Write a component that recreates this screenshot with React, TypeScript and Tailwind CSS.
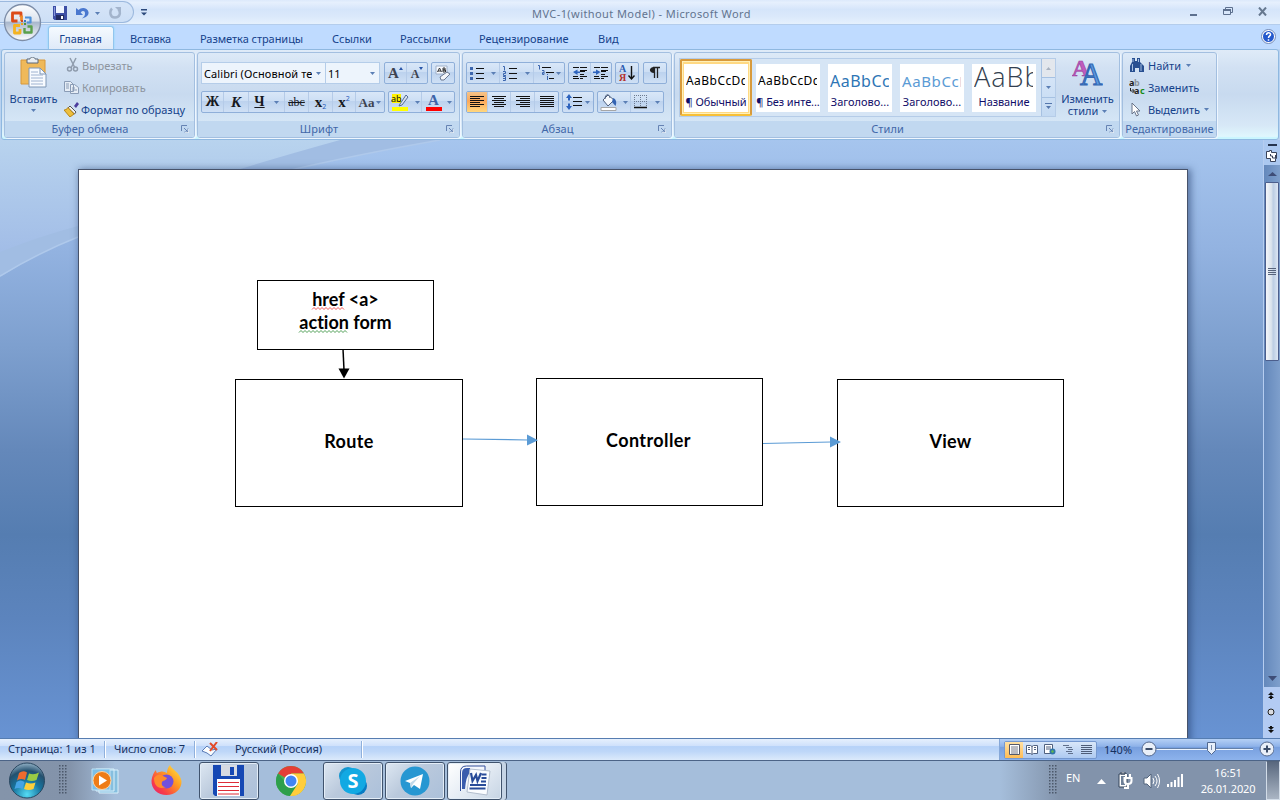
import React from "react";

type Kids = { children?: React.ReactNode; className?: string };

const Dn = ({ className = "" }: { className?: string }) => (
  <svg className={`shrink-0 ${className}`} width="5" height="3" viewBox="0 0 5 3">
    <path d="M0 0h5L2.500 3z" fill="#5b7fb5" />
  </svg>
);

const Svg = ({ w, h, children, className = "" }: Kids & { w: number; h: number }) => (
  <svg className={`shrink-0 ${className}`} width={w} height={h} viewBox={`0 0 ${w} ${h}`} fill="none">
    {children}
  </svg>
);

const Group = ({ label, w, launcher = true, children, className = "" }: Kids & { label: string; w: string; launcher?: boolean }) => (
  <section className={`flex h-[86px] shrink-0 flex-col overflow-hidden rounded-[3px] border border-[#a3bfe0] shadow-[1px_1px_0_#eef6ff] ${w}`}>
    <div className={`flex h-[68px] shrink-0 ${className}`}>{children}</div>
    <div className="flex h-4 items-center bg-[#c1d8f0] text-[11px] leading-none text-[#4167a8]">
      <span className={`flex-1 whitespace-nowrap pb-[2px] text-center ${launcher ? "pr-[6px] tracking-[0.08px]" : "tracking-[0px]"}`}>{label}</span>
      {launcher && (
        <Svg w={8} h={8} className="mb-px mr-[5px]">
          <path d="M.5 6V.5H6M3 3l3.5 3.5M7 3.5V7H3.5" stroke="#6683b3" />
          <path d="M7.5 4v3.5H4" stroke="#fff" strokeOpacity=".6" />
        </Svg>
      )}
    </div>
  </section>
);

const Box = ({ children, className = "" }: Kids) => (
  <div className={`flex h-[22px] shrink-0 divide-x divide-[#b5cbe8] overflow-hidden rounded-[2px] border border-[#8fafd9] bg-[linear-gradient(#d9e7f8_0%,#ccdef4_45%,#bcd2ee_46%,#cfe0f5_100%)] ${className}`}>
    {children}
  </div>
);

const Cell = ({ children, className = "" }: Kids) => (
  <div className={`flex h-full shrink-0 items-center justify-center ${className}`}>{children}</div>
);

const Lines = ({ rows, color = "#111" }: { rows: number[][]; color?: string }) => (
  <g fill={color} shapeRendering="crispEdges">
    {rows.map((r, i) => (
      <rect key={i} x={r[0]} y={r[1]} width={r[2]} height="1" />
    ))}
  </g>
);

function TitleBar() {
  return (
    <header className="relative flex h-[25px] shrink-0 items-center border-b border-[#b4cdec] bg-[linear-gradient(#dce9fb_0%,#e6f0fd_10%,#d5e5fa_40%,#dbe9fb_70%,#e6f1fd_100%)]">
      <div className="flex h-[22px] w-[134px] items-center rounded-r-[11px] border border-l-0 border-[#9cb9de] bg-[linear-gradient(#d6e5f8,#cddff6)] pl-[53px] pt-[2px]">
        <Svg w={14} h={14}>
          <path d="M0 0h14v14H1.500L0 12.500z" fill="#3d4fa5" />
          <path d="M3 0h8v7H3z" fill="#eef4ff" />
          <path d="M3 9h8v5H3z" fill="#222c62" />
          <path d="M8 10h2v3H8z" fill="#fff" />
          <path d="M1 1h1v9H1z" fill="#8897dc" />
        </Svg>
        <Svg w={13} h={12} className="ml-[9px]">
          <path d="M0 1v7h7L4.700 5.500C6.500 3.300 9 3.800 9 6.500c0 2-1 3.500-3 5C10.500 10.500 13 8.500 12.500 5 11.500.500 5.500-.500 2.500 3z" fill="#4a78cf" />
        </Svg>
        <Dn className="ml-[6px]" />
        <Svg w={13} h={12} className="ml-[9px]">
          <path d="M3 1.500C.500 4 .500 10.500 6 10.500c5 0 6-5 3.500-8" stroke="#a3b4cc" strokeWidth="2.500" />
          <path d="M6 0h6v6z" fill="#a3b4cc" />
        </Svg>
      </div>
      <Svg w={6} h={7} className="ml-[7px]">
        <path d="M0 0h6v1.500H0zM0 3.500h6L3 6.500z" fill="#2d4a7c" />
      </Svg>
      <h1 className="ml-[385px] whitespace-nowrap pt-[2px] text-[11px] font-normal leading-none tracking-[0.42px] text-[#62748f]">MVC-1(without Model) - Microsoft Word</h1>
      <div className="ml-auto flex items-center pb-px pr-[13px]">
        <Svg w={8} h={12} className="mr-[26px]"><path d="M1 8h7v2H1z" fill="#5d708e" /></Svg>
        <Svg w={10} h={9} className="mr-[25px]"><path d="M2.500 2V.500h7v5H8M.500 3.500h7v4h-7z" stroke="#5d708e" /><path d="M0 2h8v2H0z" fill="#5d708e" /></Svg>
        <Svg w={9} h={9}><path d="M1 .500l7 8M8 .500l-7 8" stroke="#66788f" strokeWidth="2" /></Svg>
      </div>
      <svg className="absolute left-[3px] top-[3px] z-20" width="39" height="40" viewBox="0 0 39 40">
        <defs>
          <linearGradient id="orb" x1="0" y1="0" x2="0" y2="1">
            <stop offset="0" stopColor="#fff" />
            <stop offset=".45" stopColor="#dbe3ee" />
            <stop offset=".5" stopColor="#a9b8cd" />
            <stop offset="1" stopColor="#fff" />
          </linearGradient>
        </defs>
        <circle cx="19.500" cy="19.500" r="18" fill="url(#orb)" stroke="#7e8ea8" strokeWidth="1.300" />
        <g strokeWidth="2.800" fill="none" strokeLinejoin="round">
          <path d="M14.500 18H9.500v-8H18V14" stroke="#dc4a18" />
          <path d="M18.500 12.500V18" stroke="#f08a24" />
          <path d="M22 14.500h5.500V19.500h-3.500" stroke="#4d91d8" strokeWidth="2.200" />
          <path d="M17 22.500h-5.500v7.500H17v-4" stroke="#f4b322" />
          <path d="M21.500 25v4.500h7v-6h-4" stroke="#5aa04b" strokeWidth="2.400" />
        </g>
        <path d="M18 17h2v2h-2z" fill="#d34a20" /><path d="M21 17h2v2h-2z" fill="#3b78c4" /><path d="M18 20h2v2h-2z" fill="#efa51d" /><path d="M21 20h2v2h-2z" fill="#4d9440" />
      </svg>
    </header>
  );
}

function Tabs() {
  return (
    <nav className="flex h-6 shrink-0 items-end bg-[#bfdbff] pl-[48px] text-[11px] leading-none text-[#15428b]">
      <div className="flex h-[23px] w-[66px] items-center justify-center rounded-t-[3px] border border-b-0 border-[#92c5ee] bg-[linear-gradient(#f5faff,#dfeaf8)] pt-px shadow-[0_0_2px_#7fdcf5]"><span className="-ml-px tracking-[-0.1px]">Главная</span></div>
      <div className="flex h-[23px] items-center whitespace-nowrap pt-[2px]">
        <span className="ml-4 w-[70px] tracking-[-0.1px]">Вставка</span>
        <span className="w-[132px] tracking-[-0.05px]">Разметка страницы</span>
        <span className="w-[68px]">Ссылки</span>
        <span className="w-[79px]">Рассылки</span>
        <span className="w-[119px]">Рецензирование</span>
        <span>Вид</span>
      </div>
      <Svg w={15} h={15} className="mb-[5px] ml-auto mr-[4px]">
        <circle cx="7.500" cy="7.500" r="7" fill="#fff" stroke="#7189b6" />
        <circle cx="7.500" cy="7.500" r="5.500" fill="#2459cc" />
        <path d="M5.500 6C5.500 3 9.700 3.200 9.500 5.600 9.400 7 7.500 7 7.500 9M7.500 10.200v1.500" stroke="#fff" strokeWidth="1.500" />
      </Svg>
    </nav>
  );
}

function Clipboard() {
  return (
    <Group label="Буфер обмена" w="w-[191px]">
      <div className="flex w-[57px] flex-col items-center pt-[4px] text-[11px] leading-none text-[#15428b]">
        <Svg w={27} h={32}>
          <path d="M1 3h24v24H1z" fill="#efb95a" stroke="#d8983b" />
          <path d="M7 2h3c0-2.500 5-2.500 5 0h3v4H7z" fill="#e8edf2" stroke="#5d6978" />
          <path d="M9 11h11l6 6v13H9z" fill="#f8fbff" stroke="#7e96b5" />
          <path d="M20 11v6h6" stroke="#7e96b5" />
          <path d="M11 15h7M11 18h12M11 21h12M11 24h12M11 27h12" stroke="#9eb2d0" />
        </Svg>
        <span className="mt-[4px] whitespace-nowrap">Вставить</span>
        <Dn className="mt-[5px]" />
      </div>
      <div className="flex flex-col pl-[2px] text-[11px] leading-none text-[#8d959f]">
        <div className="flex h-[22px] items-center pt-[2px]"><Svg w={18} h={16}><path d="M6 1l5 10M12 1L7 11" stroke="#8f9cad" strokeWidth="1.500" /><circle cx="5.500" cy="12" r="2" stroke="#8f9cad" strokeWidth="1.500" /><circle cx="11.500" cy="12" r="2" stroke="#8f9cad" strokeWidth="1.500" /></Svg><span className="tracking-[-0.02px]">Вырезать</span></div>
        <div className="flex h-[22px] items-center pt-[2px]"><Svg w={18} h={14}><path d="M.500 1.500h6l3 3v7h-9zM6.500 4.500h4l4 3v6h-8z" fill="#e6edf6" stroke="#8a9cb6" /><path d="M2 4h3M2 6h3M2 8h3M8 8h3M8 10h5" stroke="#8a9cb6" /></Svg><span className="tracking-[0.05px]">Копировать</span></div>
        <div className="flex h-[22px] items-center pt-[2px] text-[#15428b]"><Svg w={17} h={15}><path d="M10 4l3-4 2 2-3 4z" fill="#4c3d9c" /><path d="M6 4l6 6-1.500 2L4 6z" fill="#f2f2f2" stroke="#555" /><path d="M4 5.500L10 12l-4 3-6-7c1 0 3-.500 4-2.500z" fill="#edbf3e" stroke="#b98716" /></Svg><span className="whitespace-nowrap tracking-[-0.02px]">Формат по образцу</span></div>
      </div>
    </Group>
  );
}

const Serif = ({ children, className = "" }: Kids) => (
  <span className={`font-['Liberation_Serif',serif] font-bold leading-none text-[#16181d] ${className}`}>{children}</span>
);

function FontGroup() {
  return (
    <Group label="Шрифт" w="w-[263px]" className="flex-col gap-[7px] pl-[3px] pt-[9px]">
      <div className="flex">
        <div className="flex h-[22px] w-[125px] items-center border border-[#b5cde9] bg-[#edf4fc] pl-[2px] text-[11px] leading-none text-black">
          <span className="w-[108px] overflow-hidden whitespace-nowrap py-1 tracking-[0.1px]">Calibri (Основной текст)</span><Dn className="ml-[4px]" />
        </div>
        <div className="flex h-[22px] w-[54px] items-center border border-l-0 border-[#b5cde9] bg-[#edf4fc] pl-[2px] text-[11px] leading-none text-black">
          <span className="w-[42px]">11</span><Dn />
        </div>
        <Box className="ml-[4px] w-[44px]">
          <Cell className="w-[22px]"><Serif className="text-[15px] text-[#3d4350]!">A</Serif><Svg w={4} h={12}><path d="M0 3h4L2 0z" fill="#2956a8" /></Svg></Cell>
          <Cell className="w-5"><Serif className="pt-[2px] text-[12px] text-[#3d4350]!">A</Serif><Svg w={4} h={12}><path d="M0 0h4L2 3z" fill="#2956a8" /></Svg></Cell>
        </Box>
        <Box className="ml-[3px] w-6">
          <Cell className="w-[22px]"><Svg w={16} h={16}><path d="M1 1h11v8H1z" fill="#f7faff" stroke="#9fb0c9" /><path d="M2.500 7L4.500 3l2 4M3 6h3M8 3v4h2.500V5H8h2V3z" stroke="#333" /><path d="M5 12l7-5 3 2-6 6H6z" fill="#f3f5f9" stroke="#6b7890" /></Svg></Cell>
        </Box>
      </div>
      <div className="flex">
        <Box className="w-[184px]">
          <Cell className="w-[22px]"><Serif className="text-[14px]">Ж</Serif></Cell>
          <Cell className="w-[25px]"><Serif className="text-[15px] italic">К</Serif></Cell>
          <Cell className="w-[36px]"><Serif className="text-[14px] underline">Ч</Serif><Dn className="ml-[9px]" /></Cell>
          <Cell className="w-[24px]"><Serif className="text-[12px] font-normal! line-through">abc</Serif></Cell>
          <Cell className="w-[24px]"><Serif className="text-[15px]">x</Serif><span className="pt-2 text-[7px] leading-none text-[#1f58b8]">2</span></Cell>
          <Cell className="w-[23px]"><Serif className="text-[15px]">x</Serif><span className="pb-2 text-[7px] leading-none text-[#1f58b8]">2</span></Cell>
          <Cell className="w-[28px]"><Serif className="text-[13px] text-[#3d4350]!">Aa</Serif><Dn className="ml-[2px]" /></Cell>
        </Box>
        <Box className="ml-[3px] w-[67px]">
          <Cell className="w-[33px]">
            <Svg w={18} h={18}><path d="M1 1h9v9H1z" fill="#fff200" /><path d="M1 14h16v4H1z" fill="#ff0" /><path d="M9 11l6-9 2 2-6 8-3 1z" fill="#dbe3ee" stroke="#526b96" /><text x="0" y="9" fontSize="9" fill="#111">ab</text></Svg><Dn className="ml-[6px]" />
          </Cell>
          <Cell className="w-[32px]">
            <Svg w={17} h={18}><text x="3" y="12" fontSize="15" fontWeight="bold" fontFamily="Liberation Serif" fill="#3d64a8">A</text><path d="M1 14h16v4H1z" fill="red" /></Svg><Dn className="ml-[5px]" />
          </Cell>
        </Box>
      </div>
    </Group>
  );
}

const bull = [[6, 2, 8], [6, 7, 8], [6, 12, 8]];
const indent = [[1, 1, 6], [8, 1, 7], [8, 4, 7], [8, 5, 5], [8, 8, 4], [1, 10, 5], [8, 10, 7], [1, 12, 6], [8, 12, 3]];

function Paragraph() {
  return (
    <Group label="Абзац" w="w-[210px]" className="flex-col gap-[7px] pl-[3px] pt-[9px]">
      <div className="flex">
        <Box className="w-[99px]">
          <Cell className="w-[33px]"><Svg w={15} h={15}><Lines rows={bull} /><path d="M0 1h3v3H0zM0 6h3v3H0zM0 11h3v3H0z" fill="#3c66ae" /></Svg><Dn className="ml-[6px]" /></Cell>
          <Cell className="w-[34px]"><Svg w={15} h={15}><Lines rows={bull} /><path d="M0 .500h1.500v4M0 5.500h2.500v2H.500v2H3M0 10.500h2.500v4H0M0 12.500h2" stroke="#3c66ae" /></Svg><Dn className="ml-[7px]" /></Cell>
          <Cell className="w-[31px]"><Svg w={17} h={16}><Lines rows={[[4, 2, 9], [8, 7, 8], [11, 13, 5]]} /><path d="M0 .500h1.500v4M4 5.500h2v4H4.500v-2H6M9.500 9v1M9.500 11v4" stroke="#3c66ae" /></Svg><Dn className="ml-[1px]" /></Cell>
        </Box>
        <Box className="ml-[3px] w-[44px]">
          <Cell className="w-[22px]"><Svg w={16} h={14}><Lines rows={indent} /><path d="M5.500 3.500L1 6l4.500 3V7H8V5.500H5.500z" fill="#2d63bd" /></Svg></Cell>
          <Cell className="w-[20px]"><Svg w={16} h={14}><Lines rows={indent} /><path d="M3 3.500L7.500 6 3 9V7H0V5.500h3z" fill="#2d63bd" /></Svg></Cell>
        </Box>
        <Box className="ml-[3px] w-[24px]"><Cell className="w-[22px]"><Svg w={16} h={18}><text x="0" y="8" fontSize="10" fontWeight="bold" fontFamily="Liberation Serif" fill="#2d5bb0">A</text><text x="0" y="17" fontSize="10" fontWeight="bold" fontFamily="Liberation Serif" fill="#b4302c">Я</text><path d="M12.500 2v13M9.500 11.500l3 3.500 3-3.500" stroke="#111" strokeWidth="1.400" /></Svg></Cell></Box>
        <Box className="ml-[4px] w-[24px]"><Cell className="w-[22px]"><Svg w={12} h={14}><path d="M5 1C-.500 1-.500 7 5 7z" fill="#222" /><path d="M4 1.500h7M5.500 1v11M8.500 1v11" stroke="#222" strokeWidth="1.300" /></Svg></Cell></Box>
      </div>
      <div className="flex">
        <Box className="w-[93px]">
          <Cell className="w-[21px] bg-[linear-gradient(#f6c489,#fca95b_45%,#ffd77e)]"><Svg w={14} h={12}><Lines rows={[[0, 0, 14], [0, 2, 10], [0, 4, 14], [0, 6, 10], [0, 8, 14], [0, 10, 10]]} /></Svg></Cell>
          <Cell className="w-[23px]"><Svg w={14} h={12}><Lines rows={[[0, 0, 14], [2, 2, 10], [0, 4, 14], [2, 6, 10], [0, 8, 14], [2, 10, 10]]} /></Svg></Cell>
          <Cell className="w-[24px]"><Svg w={14} h={12}><Lines rows={[[0, 0, 14], [4, 2, 10], [0, 4, 14], [4, 6, 10], [0, 8, 14], [4, 10, 10]]} /></Svg></Cell>
          <Cell className="w-[23px]"><Svg w={14} h={12}><Lines rows={[[0, 0, 14], [0, 2, 14], [0, 4, 14], [0, 6, 14], [0, 8, 14], [0, 10, 14]]} /></Svg></Cell>
        </Box>
        <Box className="ml-[3px] w-[32px]"><Cell className="w-[30px]"><Svg w={17} h={16}><path d="M3 0l3 4H4v2.500H2V4H0zM3 16l3-4H4V9.500H2V12H0z" fill="#2d63bd" /><Lines rows={[[7, 3, 9], [7, 7, 9], [7, 11, 9]]} /></Svg><Dn className="ml-[2px]" /></Cell></Box>
        <Box className="ml-[3px] w-[67px]">
          <Cell className="w-[33px]"><Svg w={17} h={17}><path d="M3 6l5-5 6 5-6 6z" fill="#f6f9fd" stroke="#50617f" /><path d="M5 5c0-5 4-6 5-1" stroke="#50617f" /><path d="M13 4c3 1 4 4 2.500 8L12 8z" fill="#3363b2" /><path d="M1 13.500h15v3H1z" fill="#fff" stroke="#a6a6a6" /></Svg><Dn className="ml-[6px]" /></Cell>
          <Cell className="w-[32px]"><Svg w={14} h={14}><path d="M.500 0v12M6.500 0v12M12.500 0v12M0 .500h13M0 6.500h13" stroke="#6d7b91" strokeDasharray="1 1" /><path d="M0 12.500h13" stroke="#111" strokeWidth="1.400" /></Svg><Dn className="ml-[7px]" /></Cell>
        </Box>
      </div>
    </Group>
  );
}

const StyleItem = ({ sample, name, cls, selected, nameCls = "" }: { sample: string; name: string; cls: string; selected?: boolean; nameCls?: string }) => (
  <div className={`flex h-[57px] w-[72px] shrink-0 items-center justify-center ${selected ? "rounded-[2px] border-2 border-[#d89a3c] border-b-[#f7bf36] bg-[#ffd983] shadow-[inset_0_0_0_1px_#fff0b8]" : ""}`}>
    <div className="flex h-[48px] w-[64px] shrink-0 flex-col bg-white text-[11px] leading-none text-[#100d68]">
      <div className="flex h-[34px] items-center pl-[2px] pr-[3px]"><span className={`block overflow-hidden whitespace-nowrap ${cls}`}>{sample}</span></div>
      <span className={`-mt-[2px] whitespace-nowrap text-center ${nameCls}`}>{name}</span>
    </div>
  </div>
);

function Styles() {
  return (
    <Group label="Стили" w="w-[446px]" className="pl-[4px] pt-[5px]">
      <div className="flex h-[59px] w-[377px] border border-[#b5cce8] bg-[#d6e5f5]">
        <StyleItem selected sample="AaBbCcDd" name="¶ Обычный" cls="text-[12px] text-black leading-[18px] tracking-[0.45px]" nameCls="tracking-[-0.1px]" />
        <StyleItem sample="AaBbCcDd" name="¶ Без инте..." cls="text-[12px] text-black leading-[18px] tracking-[0.45px]" nameCls="tracking-[-0.1px]" />
        <StyleItem sample="AaBbCcDd" name="Заголово..." cls="text-[16px] text-[#2e75b5] leading-[22px] tracking-[0.5px]" />
        <StyleItem sample="AaBbCcDd" name="Заголово..." cls="text-[15px] text-[#5b9bd5] leading-[22px] tracking-[0.6px]" />
        <StyleItem sample="AaBbC" name="Название" cls="font-['Open_Sans',sans-serif] font-light text-[27px] text-[#333f50] leading-[34px] tracking-[1px] pb-[7px]" nameCls="tracking-[-0.1px]" />
        <div className="ml-px flex w-[14px] shrink-0 flex-col divide-y divide-[#a6c1e2] border-l border-[#a6c1e2] bg-[linear-gradient(#ddeafa,#c3d9f2)]">
          <div className="flex flex-1 items-center justify-center bg-[#e3e7ed]"><svg width="5" height="3"><path d="M0 3h5L2.500 0z" fill="#a8b2c0" /></svg></div>
          <div className="flex flex-1 items-center justify-center"><Dn /></div>
          <div className="flex flex-1 items-center justify-center"><Svg w={7} h={7}><path d="M0 0h7v1H0zM1 3h5L3.500 6z" fill="#5577ad" /></Svg></div>
        </div>
      </div>
      <div className="flex flex-1 flex-col items-center text-[11px] leading-none text-[#15428b]">
        <Svg w={31} h={29}>
          <text x="0" y="18" fontSize="24" fontWeight="bold" fontFamily="Liberation Serif" fill="#bf5bbd" stroke="#9a3d9c" strokeWidth=".6">A</text>
          <text x="8" y="27" fontSize="31" fontFamily="Liberation Serif" fill="#5d9be0" stroke="#3568b4" strokeWidth="1.200">A</text>
        </Svg>
        <span className="mt-[6px] tracking-[-0.05px]">Изменить</span>
        <span className="mt-[1px] flex items-center">стили<Dn className="ml-[4px] mt-[1px]" /></span>
      </div>
    </Group>
  );
}

function Editing() {
  return (
    <Group label="Редактирование" w="w-[95px]" launcher={false} className="flex-col pl-[6px] text-[11px] leading-none text-[#15428b]">
      <div className="flex h-[22px] items-center pt-[2px]"><Svg w={19} h={15}><path d="M3 0h3v3h2V0h3v4l4 4v6h-5v-4H6v4H1V8l2-4z" fill="#284f91" /><path d="M3.500 6v7M12 6v7M4 1v3M9.500 1v3" stroke="#a5bfe2" /></Svg><span>Найти</span><Dn className="ml-[5px]" /></div>
      <div className="flex h-[22px] items-center pt-[2px]"><Svg w={19} h={16}><g fontSize="9" fontWeight="bold"><text x="0" y="7" fill="#222">a</text><text x="5" y="7" fill="#8d949d">b</text><text x="5" y="15" fill="#222">a</text><text x="11" y="15" fill="#168b16">c</text></g><path d="M1.500 9v3H5M3.500 10l2 2-2 2" stroke="#222" /></Svg><span className="tracking-[-0.05px]">Заменить</span></div>
      <div className="flex h-[22px] items-center pt-[2px]"><Svg w={19} h={15}><path d="M3 1v11l2.500-2.500L7.500 14l2-1-2-4H11z" fill="#fff" stroke="#68748a" /></Svg><span className="tracking-[-0.1px]">Выделить</span><Dn className="ml-[4px]" /></div>
    </Group>
  );
}

function Ribbon() {
  return (
    <div className="shrink-0 bg-[#b9d2f0] px-px">
      <div className="flex h-[91px] gap-[2px] rounded-[3px] border border-[#8fb8e0] bg-[linear-gradient(#dfebf8_0%,#d2e1f3_20%,#c8daef_50%,#d7e8f7_85%,#e2fbff_100%)] pl-[2px] pt-[2px] shadow-[inset_0_-2px_1px_#c9f6ff]">
        <Clipboard />
        <FontGroup />
        <Paragraph />
        <Styles />
        <Editing />
      </div>
    </div>
  );
}

function Diagram() {
  return (
    <article className="relative ml-[78px] mt-[29px] h-[600px] w-[1110px] border border-[#47536b] bg-white font-['Lato',sans-serif] text-[18px] font-bold leading-[23px] text-black shadow-[2px_1px_7px_1px_rgba(35,60,105,0.55)] [font-variant-ligatures:none]">
      <div className="absolute left-[178px] top-[110px] flex h-[70px] w-[177px] flex-col items-center border border-black pt-[7px]">
        <span>href &lt;a&gt;</span>
        <span>action form</span>
      </div>
      <div className="absolute left-[156px] top-[209px] flex h-[128px] w-[228px] items-center justify-center border border-black pb-[4px] tracking-[0.4px]">Route</div>
      <div className="absolute left-[457px] top-[208px] flex h-[128px] w-[227px] items-center justify-center border border-black pb-[3px] pr-[2px] tracking-[0.4px]">Controller</div>
      <div className="absolute left-[758px] top-[209px] flex h-[128px] w-[227px] items-center justify-center border border-black pb-[3px] tracking-[0.2px]">View</div>
      <svg className="absolute left-0 top-0" width="1108" height="500" viewBox="79 170 1108 500" fill="none">
        <path d="M343 349l1 21" stroke="#000" strokeWidth="1.500" />
        <path d="M338.500 368.500h11L344 378.500z" fill="#000" />
        <path d="M463 439l65 1M763 443.500l68-1.500" stroke="#5b9bd5" strokeWidth="1.200" />
        <path d="M527 434.500v11l11-5.300zM830 436.500v11l11-5.500z" fill="#5b9bd5" />
        <path d="M312 309.500l2-2 2 2 2-2 2 2 2-2 2 2 2-2 2 2 2-2 2 2 2-2 2 2 2-2 2 2 2-2 2 2" stroke="#f03030" strokeWidth=".8" />
        <path d="M299 332.500l2-2 2 2 2-2 2 2 2-2 2 2 2-2 2 2 2-2 2 2 2-2 2 2 2-2 2 2 2-2 2 2 2-2 2 2 2-2 2 2 2-2 2 2 2-2 2 2" stroke="#25872c" strokeWidth=".8" />
      </svg>
    </article>
  );
}

function Workspace() {
  return (
    <main className="relative flex h-[598px] shrink-0 overflow-hidden bg-[linear-gradient(#a6c5ee_0%,#93b3e1_18%,#7d9fce_35%,#6488ba_52%,#557db1_66%,#5c84bd_80%,#6893d3_100%)]">
      <svg className="absolute left-0 top-0" width="1263" height="300" viewBox="0 140 1263 300">
        <defs>
          <linearGradient id="haze" x1="0" y1="0" x2="0" y2="1">
            <stop offset="0" stopColor="#b8d3ee" />
            <stop offset="1" stopColor="#a2bde7" />
          </linearGradient>
        </defs>
        <path d="M0 140h440Q200 182 78 237 40 252 0 277z" fill="#a1bde3" />
        <path d="M0 140h340Q160 190 78 226 40 236 0 252z" fill="url(#haze)" />
        <path d="M440 140Q200 182 78 237 40 252 0 276" stroke="#afc9eb" strokeWidth="1.500" fill="none" />
      </svg>
      <div className="relative w-[1263px] shrink-0 overflow-hidden"><Diagram /></div>
      <aside className="relative flex w-[17px] shrink-0 flex-col items-center border-l border-[#b6cdf0] bg-[#abc8f0]">
        <div className="mt-[4px] h-[2px] w-[9px] bg-[#26344e]" />
        <Svg w={12} h={12} className="mt-[4px]"><path d="M.500 1.500h3v-1h2v2h5v6h-1v3h-5v-3h-4z" fill="#fff" stroke="#39435a" /><path d="M4.500 4v2h2v2h3V5" stroke="#39435a" /></Svg>
        <div className="mt-[3px] flex h-[522px] w-full shrink-0 flex-col items-center bg-[linear-gradient(90deg,#6488bb,#7e9fcc)]">
          <svg className="mt-[7px] shrink-0" width="9" height="4"><path d="M0 4h9L4.500 0z" fill="#3e4d77" /></svg>
          <div className="mt-[6px] flex h-[179px] w-[14px] shrink-0 flex-col items-center justify-center gap-px rounded-[1px] border border-[#4c5e8c] bg-[linear-gradient(90deg,#f4f6fa,#d9e2ec_45%,#bccde3_60%,#dce6f3)]">
            <i className="h-px w-2 bg-[#57637b]" /><i className="h-px w-2 bg-[#57637b]" /><i className="h-px w-2 bg-[#57637b]" /><i className="h-px w-2 bg-[#57637b]" />
          </div>
          <svg className="mb-[6px] mt-auto shrink-0" width="9" height="5"><path d="M0 0h9L4.500 5z" fill="#3e4d77" /></svg>
        </div>
        <div className="flex w-full flex-1 flex-col items-center bg-[#b3cbf3] pr-[3px] pt-[5px]">
          <Svg w={6} h={7}><path d="M0 3h6L3 0zM0 6h6L3 3zM2 6h2v1H2z" fill="#111" /></Svg>
          <Svg w={8} h={8} className="mt-[9px]"><circle cx="4" cy="4" r="3" fill="#d9dbe0" stroke="#222" /></Svg>
          <Svg w={6} h={7} className="mt-[10px]"><path d="M0 1h6L3 4zM0 4h6L3 7zM2 0h2v1H2z" fill="#111" /></Svg>
        </div>
      </aside>
    </main>
  );
}

function StatusBar() {
  const sep = <i className="h-[17px] w-[2px] border-l border-r border-l-[#8fb0dc] border-r-white" />;
  return (
    <footer className="flex h-[23px] shrink-0 items-center border-b border-t border-b-[#4c6487] border-t-[#567db1] bg-[linear-gradient(#e6f0fd_0%,#cfe1fb_32%,#b6d2f8_36%,#bed7f8_60%,#dceafb_100%)] text-[11px] leading-none text-[#15305f]">
      <span className="w-[104px] whitespace-nowrap pb-[2px] pl-[8px]">Страница: 1 из 1</span>{sep}
      <span className="w-[88px] whitespace-nowrap pb-[2px] pl-[8px] tracking-[-0.1px]">Число слов: 7</span>{sep}
      <Svg w={17} h={15} className="mb-px ml-[6px]"><path d="M0 9l5-5 5 4 5-1-6 7-4-3z" fill="#fafdff" stroke="#5b7bb5" /><path d="M8 1l7 7M15 0L8 9" stroke="#e24a2a" strokeWidth="2" /></Svg>
      <span className="ml-[16px] w-[126px] whitespace-nowrap pb-[2px] tracking-[-0.1px]">Русский (Россия)</span>{sep}
      <div className="ml-auto flex h-full w-[281px] items-center border-l border-[#86a8d8] bg-[linear-gradient(#b5d0f5_0%,#8eb2e9_35%,#78a0df_40%,#8db3ec_100%)] pl-[4px]">
        <div className="flex h-[18px] w-[93px] rounded-[2px] border border-[#7598cf] bg-[linear-gradient(#d9e7f9,#aecaf1)]">
          <Cell className="w-[18px] bg-[linear-gradient(#ffe1a4,#ffbc55)]"><Svg w={11} h={11}><path d="M.500.500h10v10H.500z" fill="#fff" stroke="#55596a" /><path d="M2 3h7M2 5h7M2 7h7M2 9h7" stroke="#55596a" strokeWidth=".8" /></Svg></Cell>
          <Cell className="w-[18px]"><Svg w={12} h={11}><path d="M.500 1.500h4l1.500 1 1.500-1h4v8H7.500L6 10.500 4.500 9.500h-4zM6 2v8" fill="#fff" stroke="#50617f" /><path d="M2 3.500h2M2 5.500h2M8 3.500h2M8 5.500h2" stroke="#50617f" /></Svg></Cell>
          <Cell className="w-[18px]"><Svg w={12} h={11}><path d="M.500.500h8v9h-8z" fill="#fff" stroke="#50617f" /><path d="M2 3h5M2 5h5" stroke="#50617f" /><circle cx="8.500" cy="7.500" r="3" fill="#3175a9" /><path d="M7 7l2-1 1 2-2 1z" fill="#62b84e" /></Svg></Cell>
          <Cell className="w-[18px]"><Svg w={11} h={11}><Lines color="#60708c" rows={[[0, 1, 6], [3, 3, 6], [5, 5, 5], [3, 7, 6], [5, 9, 5]]} /></Svg></Cell>
          <Cell className="w-[19px]"><Svg w={11} h={11}><Lines color="#4e5d78" rows={[[0, 1, 11], [0, 3, 11], [0, 5, 11], [0, 7, 11], [0, 9, 11]]} /></Svg></Cell>
        </div>
        <span className="ml-[7px] w-[37px] pb-px">140%</span>
        <Svg w={133} h={20} className="mb-[2px]">
          <path d="M15 10.500h97" stroke="#eaf3ff" /><path d="M15 9.500h97" stroke="#6480a9" />
          <circle cx="8" cy="10" r="7" fill="#e9eff8" stroke="#55698e" /><path d="M4.500 10h7" stroke="#3c4d69" strokeWidth="2" />
          <circle cx="126" cy="10" r="7" fill="#e9eff8" stroke="#55698e" /><path d="M122.500 10h7M126 6.500v7" stroke="#3c4d69" strokeWidth="2" />
          <path d="M66.500 3.500h8v8l-4 4-4-4z" fill="#e7effa" stroke="#51688f" /><path d="M70.500 6v5" stroke="#7489ac" />
        </Svg>
      </div>
    </footer>
  );
}

const Task = ({ children, className = "" }: Kids) => (
  <div className={`flex h-[38px] shrink-0 items-center justify-center rounded-[3px] border border-[#40536d] shadow-[inset_0_0_0_1px_#e3edf7] ${className}`}>{children}</div>
);

const Grip = () => (
  <Svg w={8} h={31}>
    <g fill="#4c596b">{Array.from({ length: 30 }, (_, i) => <rect key={i} x={(i % 3) * 3} y={Math.floor(i / 3) * 3} width="1.500" height="1.500" />)}</g>
  </Svg>
);

function Taskbar() {
  return (
    <div className="flex h-[39px] shrink-0 items-center bg-[linear-gradient(90deg,#8494aa_0px,#8393aa_70px,#a5bedb_115px,#a5bedb_1000px,#8293ab_1060px,#8293ab_1280px)]">
      <Svg w={38} h={38} className="ml-[8px]">
        <defs><radialGradient id="start" cx=".5" cy=".9" r=".9"><stop offset="0" stopColor="#55dcf5" /><stop offset=".45" stopColor="#17759f" /><stop offset=".75" stopColor="#24506e" /><stop offset="1" stopColor="#93b2c7" /></radialGradient></defs>
        <circle cx="19" cy="18.500" r="17.500" fill="url(#start)" stroke="#2a4861" />
        <path d="M11 11q4-3 8-.500L17 18q-4-2-8 .500z" fill="#ef6b2e" /><path d="M21 11.500q5 2 10-1l-2.500 7.500q-5 2-9.500 0z" fill="#9acb45" /><path d="M8.500 20q4-3 8 0l-2 7q-4-2-8 0z" fill="#45a4e5" /><path d="M18 20.500q5 2 9.500 0l-2 6.500q-5 2-9.500 0z" fill="#fdcf3b" />
      </Svg>
      <div className="ml-[13px]"><Grip /></div>
      <Svg w={28} h={26} className="ml-[24px]">
        <path d="M7 2h20v23H8zM5 1h18v22H5z" fill="#86bfdf" stroke="#d9f0fb" /><path d="M1 1h18v21H1z" fill="#7dc0e9" stroke="#bfe2f5" /><circle cx="11" cy="12.500" r="9" fill="#ee7c17" stroke="#ffd5a6" /><path d="M8 7.500l8 5-8 5z" fill="#fff" />
      </Svg>
      <Svg w={31} h={32} className="mb-[2px] ml-[32px]">
        <defs><linearGradient id="fox" x1="1" y1="0" x2="0" y2="1"><stop offset="0" stopColor="#fff04a" /><stop offset=".4" stopColor="#ff9a22" /><stop offset=".75" stopColor="#f83b4b" /><stop offset="1" stopColor="#df1f75" /></linearGradient></defs>
        <path d="M19 1c1 4 10 7 11.500 16C31 25 24 31 15.500 31 7 31 0 25 .500 16.500 1 12 3 8 5 6c0 2 1 3 1 3 4-2 7-2 10 0 0-3 1-6 3-8z" fill="url(#fox)" />
        <circle cx="15.500" cy="17.500" r="7" fill="#7250dd" /><path d="M3 14c3-4 6-4 9-2l4 2c-1 3-4 2-5 4-1 3 1 5 4 5-7 3-12-1-12-9z" fill="#ff8b2b" />
      </Svg>
      <Task className="ml-[17px] w-[60px] bg-[linear-gradient(135deg,#dde7f2,#bac9dc_45%,#abc0da)]">
        <Svg w={32} h={32}><path d="M0 0h31v31H2l-2-2z" fill="#1648b4" /><path d="M8 0h16v11H8z" fill="#d6dae2" /><path d="M17 2h4v8h-4z" fill="#1648b4" /><path d="M4 14h23v17H4z" fill="#fff" /><path d="M5 17.500h21M5 21.500h21M5 25.500h21M5 29h21" stroke="#dd2c37" /></Svg>
      </Task>
      <Svg w={32} h={32} className="ml-[16px]">
        <circle cx="16" cy="16" r="15" fill="#4caf50" /><path d="M3 8.500A15 15 0 0129 8.500H16v7.500z" fill="#e53e35" /><path d="M3 8.500A15 15 0 0015 31l8-12-7-3-5 2z" fill="#2d9f4b" /><path d="M29 8.500H16l7 10L15 31A15 15 0 0029 8.500z" fill="#ffcd3b" /><circle cx="16" cy="16" r="7" fill="#fff" /><circle cx="16" cy="16" r="5.500" fill="#4285f4" />
      </Svg>
      <Task className="ml-[16px] w-[60px] bg-[linear-gradient(135deg,#dde7f2,#bac9dc_45%,#abc0da)]">
        <Svg w={30} h={30}><circle cx="10" cy="10" r="9" fill="#1395cf" /><circle cx="20" cy="20" r="9" fill="#087bc3" /><circle cx="15" cy="15" r="13" fill="#12a9e3" /><text x="15" y="22" textAnchor="middle" fontSize="20" fontWeight="bold" fill="#fff">S</text></Svg>
      </Task>
      <Task className="ml-[2px] w-[60px] bg-[linear-gradient(135deg,#dde7f2,#bac9dc_45%,#abc0da)]">
        <Svg w={30} h={30}><circle cx="15" cy="15" r="14.500" fill="#2797d2" /><path d="M5 15L23 8l-3 15-6-4-3 3-1-5z" fill="#fff" /><path d="M10 17l10-7-7 8-2 4z" fill="#c1d9e9" /></Svg>
      </Task>
      <div className="ml-[2px] flex w-[60px] rounded-[3px] border-r border-[#40536d] bg-[#c5d4e5]">
        <Task className="w-[55px] bg-[linear-gradient(135deg,#fff,#e5ecf4_50%,#c6d4e4)]">
          <Svg w={32} h={31}><path d="M1.500 26V7q0-6 6-6H26v5" fill="#f5f8fd" stroke="#334f9b" /><path d="M3 24V8q0-5 5-5h3v5q-4 3-5 16z" fill="#3a5cad" /><path d="M11 4l20 2-3 24-20-3z" fill="#fafcff" stroke="#b3bece" /><path d="M12 8l1.500 8 3.500-6 1.500 6 3.500-8" stroke="#284b99" strokeWidth="2.200" /><path d="M22.500 9.500h5M22.500 13h5M22 16.500h5M11 20h16M10.500 23.500h16" stroke="#284b99" strokeWidth="2" /></Svg>
        </Task>
      </div>
      <div className="ml-auto flex h-full items-center text-white">
        <Grip />
        <span className="ml-[9px] w-[31px] pb-[6px] text-[11px] leading-none">EN</span>
        <Svg w={9} h={5} className="mt-[2px]"><path d="M0 5h9L4.500 0z" fill="#fff" /></Svg>
        <Svg w={16} h={17} className="ml-[12px]"><path d="M1 2h8v13H1zM3 0h4v2H3z" fill="#fff" stroke="#35445a" /><path d="M3 4h4v9H3z" fill="#6e8098" /><path d="M8 2v4M12 2v4M6.500 6h7v3q0 3-3.500 3t-3.500-3zM10 12v4H6" stroke="#fff" strokeWidth="2" /></Svg>
        <Svg w={17} h={16} className="ml-[9px]"><path d="M1 5h3l4-4v14l-4-4H1z" fill="#fff" stroke="#53647c" /><path d="M10 5q2 3 0 6M12 3q4 5 0 10M14.500 1q4 7 0 14" stroke="#fff" /></Svg>
        <Svg w={17} h={14} className="ml-[7px]"><path d="M0 10h2v3H0zM3.500 8h2v5h-2zM7 6h2v7H7zM10.500 3h2v10h-2zM14 0h2v13h-2z" fill="#fff" /></Svg>
        <div className="ml-[17px] flex w-[54px] flex-col items-center gap-[5px] whitespace-nowrap pb-px text-[11px] leading-none tracking-[-0.15px]"><span>16:51</span><span>26.01.2020</span></div>
        <div className="ml-[11px] h-full w-[14px] border border-[#d2dce8] border-t-[#55657b] bg-[linear-gradient(#59687e,#aab5c4)]" />
      </div>
    </div>
  );
}

export default function App() {
  return (
    <div className="flex h-[800px] w-[1280px] flex-col overflow-hidden bg-[#bfdbff] font-['Noto_Sans','Open_Sans',sans-serif]">
      <TitleBar />
      <Tabs />
      <Ribbon />
      <Workspace />
      <StatusBar />
      <Taskbar />
    </div>
  );
}
